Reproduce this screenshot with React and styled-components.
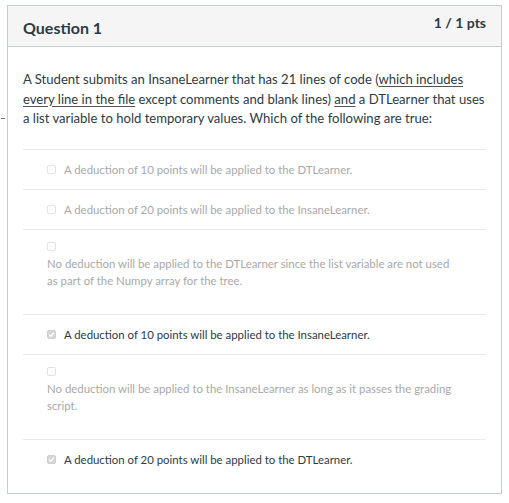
import React from "react";
import styled, { createGlobalStyle } from "styled-components";

const Global = createGlobalStyle`
  html, body { margin: 0; padding: 0; background: #fff; }
  body { font-family: Lato, "Open Sans", sans-serif; color: #2d3b45; }
`;

const Page = styled.div`
  padding: 5px 8px 8px 7px;
`;

const Card = styled.section`
  box-sizing: border-box;
  width: 495px;
  border: 1px solid #c7cdd1;
  background: #fff;
`;

const Header = styled.header`
  box-sizing: border-box;
  height: 41px;
  display: flex;
  justify-content: space-between;
  align-items: flex-start;
  padding: 0 15px 0 15px;
  background: #f5f5f5;
  border-bottom: 1px solid #c7cdd1;
`;

const Title = styled.h2`
  margin: 0;
  padding-top: 10px;
  font-size: 16px;
  line-height: 24px;
  font-weight: 700;
  color: #2d3b45;
`;

const Points = styled.div`
  padding-top: 7px;
  font-size: 14px;
  line-height: 20px;
  font-weight: 700;
  color: #2d3b45;
`;

const Body = styled.div`
  padding: 23px 15px 14px 15px;
`;

const Prompt = styled.p`
  position: relative;
  margin: 0 0 20px 0;
  font-size: 13.1px;
  line-height: 19.5px;
  color: #2d3b45;
  &::before {
    content: "";
    position: absolute;
    left: -22px;
    top: 48px;
    width: 4px;
    height: 1px;
    background: #777;
  }
`;

const U = styled.span`
  text-decoration: underline;
  text-underline-offset: 2px;
  text-decoration-color: #555;
`;

const List = styled.div`
  display: flex;
  flex-direction: column;
`;

const Row = styled.label`
  display: flex;
  flex-direction: ${(p) => (p.$wrap ? "column" : "row")};
  align-items: ${(p) => (p.$wrap ? "flex-start" : "center")};
  gap: ${(p) => (p.$wrap ? "4px" : "8px")};
  border-top: 1px solid #e9eaeb;
  padding: ${(p) => (p.$wrap ? "12px 28px 25px 24px" : "12px 10px 11px 24px")};
  color: ${(p) => (p.$checked ? "#2d3b45" : "#a9a9a9")};
  font-size: 11.4px;
  line-height: ${(p) => (p.$wrap ? "17px" : "16px")};
`;

const Box = styled.span`
  flex: none;
  box-sizing: border-box;
  width: 9px;
  height: 9px;
  border-radius: 2px;
  border: 1px solid ${(p) => (p.$checked ? "#cfcfcf" : "#e2e2e2")};
  background: ${(p) => (p.$checked ? "#d6d6d6" : "#fff")};
  display: flex;
  align-items: center;
  justify-content: center;
`;

const Text = styled.span``;

const Check = () => (
  <svg width="7" height="7" viewBox="0 0 7 7">
    <path d="M1 3.6 L2.8 5.3 L6 1.6" fill="none" stroke="#fff" strokeWidth="1.3" />
  </svg>
);

const answers = [
  { text: "A deduction of 10 points will be applied to the DTLearner." },
  { text: "A deduction of 20 points will be applied to the InsaneLearner." },
  {
    text:
      "No deduction will be applied to the DTLearner since the list variable are not used as part of the Numpy array for the tree.",
    wrap: true,
  },
  { text: "A deduction of 10 points will be applied to the InsaneLearner.", checked: true },
  {
    text:
      "No deduction will be applied to the InsaneLearner as long as it passes the grading script.",
    wrap: true,
  },
  { text: "A deduction of 20 points will be applied to the DTLearner.", checked: true },
];

export default function App() {
  return (
    <Page>
      <Global />
      <Card>
        <Header>
          <Title>Question 1</Title>
          <Points>1 / 1 pts</Points>
        </Header>
        <Body>
          <Prompt>
            A Student submits an InsaneLearner that has 21 lines of code (
            <U>which includes every line in the file</U> except comments and blank lines){" "}
            <U>and</U> a DTLearner that uses a list variable to hold temporary values. Which of
            the following are true:
          </Prompt>
          <List>
            {answers.map((a, i) => (
              <Row key={i} $wrap={a.wrap} $checked={a.checked}>
                <Box $checked={a.checked}>{a.checked && <Check />}</Box>
                <Text>{a.text}</Text>
              </Row>
            ))}
          </List>
        </Body>
      </Card>
    </Page>
  );
}
